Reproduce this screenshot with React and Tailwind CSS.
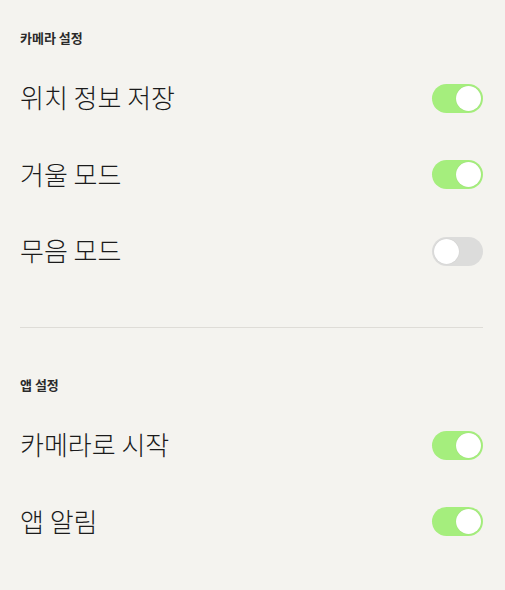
import React from "react";

const font = { fontFamily: '"Noto Sans CJK KR", "Noto Sans", sans-serif' };

function Toggle({ on }) {
  return (
    <div
      className={
        "relative w-[51px] h-[29px] rounded-full flex items-center px-[2px] " +
        (on ? "bg-[#a5ee7d] justify-end" : "bg-[#dcdcdb] justify-start")
      }
    >
      <div className="w-[25px] h-[25px] rounded-full bg-white shadow-[0_0_1px_rgba(0,0,0,0.15)]" />
    </div>
  );
}

function Row({ label, on }) {
  return (
    <div className="h-[76.5px] flex items-center justify-between">
      <span className="text-[26px] leading-none font-light text-[#1b1b1b] -mt-[2px]">{label}</span>
      <Toggle on={on} />
    </div>
  );
}

function Header({ children }) {
  return (
    <div className="h-4 flex items-center text-[13px] font-bold text-[#2a2a2a]">
      {children}
    </div>
  );
}

export default function App() {
  return (
    <div
      className="w-[505px] h-[590px] bg-[#f4f3ef] pl-5 pr-[22px] pt-[30px] overflow-hidden"
      style={font}
    >
      <Header>카메라 설정</Header>
      <div className="mt-[14px]">
        <Row label="위치 정보 저장" on />
        <Row label="거울 모드" on />
        <Row label="무음 모드" on={false} />
      </div>
      <div className="mt-[37.5px] h-px bg-[#dedcd7]" />
      <div className="mt-[49px]">
        <Header>앱 설정</Header>
      </div>
      <div className="mt-[14px]">
        <Row label="카메라로 시작" on />
        <Row label="앱 알림" on />
      </div>
    </div>
  );
}
